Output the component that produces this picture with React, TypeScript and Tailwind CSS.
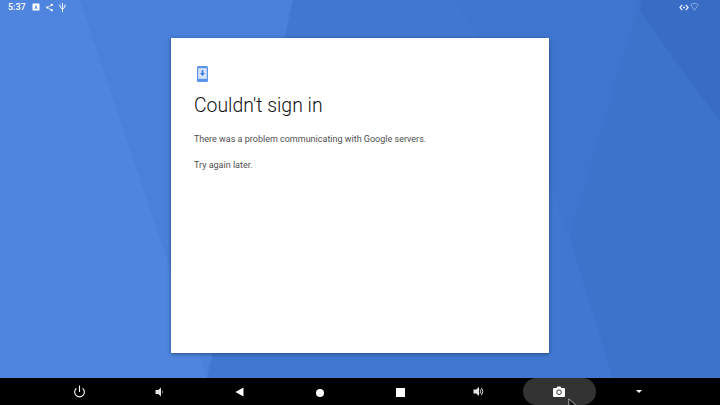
import { Power } from 'lucide-react'

function Wallpaper() {
  return (
    <svg className="absolute inset-0 h-full w-full" viewBox="0 0 720 378" preserveAspectRatio="none">
      <rect width="720" height="378" fill="#4f85de" />
      <polygon points="80,0 293,0 207,378" fill="#4a80da" />
      <polygon points="293,0 720,0 720,378 207,378" fill="#4077d0" />
      <polygon points="455,0 720,0 720,378 613,378 556,200 478,38" fill="#3e76cf" />
      <polygon points="640,0 720,0 720,378 613,378 570,235" fill="#3c73cb" />
      <polygon points="641,0 720,0 720,122 640,12" fill="#386cc5" />
    </svg>
  )
}

function StatusBar() {
  return (
    <div className="flex h-[14px] shrink-0 items-center justify-between pl-2 pr-[21px] text-white">
      <div className="flex items-center">
        <span className="w-[16px] text-[9px] font-medium leading-none">5:37</span>
        <svg width="8" height="8" viewBox="0 0 8 8" className="ml-[8px] mr-[5px]">
          <rect width="7" height="7" x=".5" y=".5" rx=".6" fill="#fff" />
          <path d="M4 1.800 5.600 6H4.800L4 4 3.200 6H2.400z" fill="#4580da" />
        </svg>
        <svg width="9" height="9" viewBox="0 0 24 24" className="mr-[5px]" fill="#fff">
          <path d="M18 16a3 3 0 0 0-2 .8L8.900 12.700a3 3 0 0 0 0-1.400L16 7.200A3 3 0 1 0 15 5c0 .2 0 .5.100.7L8 9.800a3 3 0 1 0 0 4.400l7.100 4.200A3 3 0 1 0 18 16z" />
        </svg>
        <svg width="7" height="9" viewBox="0 0 7 9" fill="none" stroke="#fff" strokeWidth="1">
          <path d="M3.500 0V9M1 1.500V3.500Q1 5 3.500 5.800Q6 5 6 3.500V1.500" />
        </svg>
      </div>
      <div className="flex items-center gap-[1px]">
        <svg width="10" height="7" viewBox="0 0 10 7" fill="none" stroke="#e3ecfb" strokeWidth="1.300">
          <path d="M3.200.8 1 3.500l2.200 2.700M6.800.8 9 3.500 6.800 6.200M4 3.500h2" />
        </svg>
        <svg width="9" height="8" viewBox="0 0 9 8" fill="none" stroke="#8fb0e6" strokeWidth=".9">
          <path d="M.7 1.800 2.300.6h4.400l1.600 1.200L4.500 7.300z" />
        </svg>
      </div>
    </div>
  )
}

function Card() {
  return (
    <div className="h-[315px] w-[378px] bg-white pl-[23px] pt-[28px] shadow-[0_1px_4px_rgba(0,0,0,0.4)]">
      <svg width="11" height="16" viewBox="0 0 11 16" className="mb-[12px] ml-[3px] block">
        <rect x="0" y="0" width="11" height="16" rx="1.500" fill="#5b92ea" />
        <rect x="1.200" y="2.200" width="8.600" height="10.600" fill="#d5e3fa" />
        <path d="M4.700 4h1.600v3h1.700L5.500 10 3 7h1.700z" fill="#3b78e0" />
      </svg>
      <h1 className="text-[19.400px] font-light leading-[24px] text-[#111111]">Couldn't sign in</h1>
      <p className="mt-[14px] text-[9px] leading-[14px] text-[#505050]">There was a problem communicating with Google servers.</p>
      <p className="mt-[12px] text-[9px] leading-[14px] text-[#505050]">Try again later.</p>
    </div>
  )
}

function NavBar() {
  const slot = 'flex w-[80px] items-center justify-center'
  return (
    <div className="relative flex h-[27px] shrink-0 items-center bg-black pl-[39px] text-white">
      <div className={slot}><Power size={13} strokeWidth={2} /></div>
      <div className={slot}>
        <svg width="10" height="10" viewBox="0 0 10 10" fill="#e5e5e5" className="translate-x-[1px]"><path d="M.5 3h2.700L6 .5v9L3.200 7H.5zM7 3.200q1.600 1.800 0 3.600z" /></svg>
      </div>
      <div className={slot}>
        <svg width="9" height="10" viewBox="0 0 9 10" fill="#fff"><path d="M.5 5 8.500 .5v9z" /></svg>
      </div>
      <div className={slot}><div className="h-[8px] w-[8px] translate-x-[1px] translate-y-[1px] rounded-full bg-white" /></div>
      <div className={slot}><div className="h-[9px] w-[9px] translate-x-[1px] translate-y-[1px] bg-white" /></div>
      <div className={slot}>
        <svg width="12" height="11" viewBox="0 0 12 11" fill="#e5e5e5">
          <path d="M.5 3.500h2.700L6 1v9L3.200 7.500H.5z" />
          <path d="M7 3.500q1.300 2 0 4M8.500 1.800q2.600 3.700 0 7.400" fill="none" stroke="#e5e5e5" strokeWidth="1" />
        </svg>
      </div>
      <div className={slot}>
        <div className="flex h-[27px] w-[73px] shrink-0 items-center justify-center rounded-full bg-[#333333]">
          <svg width="12" height="11" viewBox="0 0 12 11">
            <path d="M1 2h2.500L4.500.5h3L8.500 2H11a1 1 0 0 1 1 1v7a1 1 0 0 1-1 1H1a1 1 0 0 1-1-1V3a1 1 0 0 1 1-1z" fill="#fff" />
            <circle cx="6" cy="6.200" r="2.300" fill="none" stroke="#333" strokeWidth="1" />
          </svg>
        </div>
      </div>
      <div className={slot}>
        <div className="h-0 w-0 border-x-[3.500px] border-t-[3.500px] border-x-transparent border-t-white" />
      </div>
      <svg width="11" height="16" viewBox="0 0 11 16" className="absolute left-[568px] top-[20px]">
        <path d="M.8.800V11l2.700-2.400L5.500 13l1.700-.8-2-4.200h3.600z" fill="#111" stroke="#c4c4c4" strokeWidth=".8" />
      </svg>
    </div>
  )
}

export default function App() {
  return (
    <div className="flex h-[405px] w-[720px] flex-col overflow-hidden font-['Roboto',sans-serif]">
      <div className="relative flex flex-1 flex-col">
        <Wallpaper />
        <div className="relative flex flex-1 flex-col">
          <StatusBar />
          <div className="flex flex-1 justify-center pt-[24px]">
            <Card />
          </div>
        </div>
      </div>
      <NavBar />
    </div>
  )
}
